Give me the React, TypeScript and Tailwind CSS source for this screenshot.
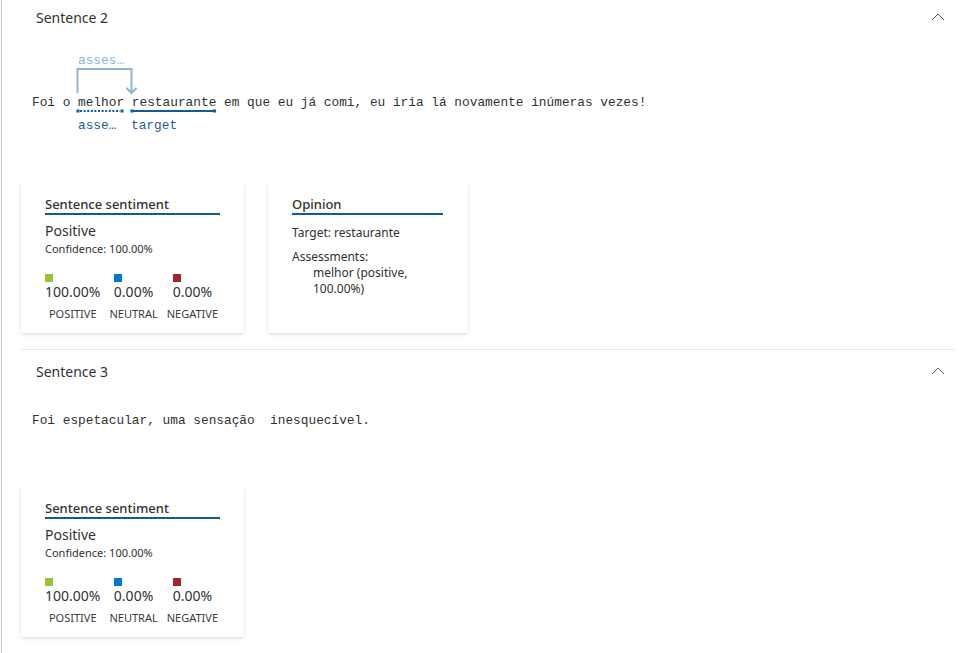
import React from "react";

const SANS = "font-['Segoe_UI','Noto_Sans','Open_Sans',sans-serif]";
const MONO = "font-['Consolas','Liberation_Mono','DejaVu_Sans_Mono',monospace]";

function Chevron() {
  return (
    <svg width="14" height="8" viewBox="0 0 14 8" className="mb-[3px]">
      <polyline points="1,7 7,1 13,7" fill="none" stroke="#605e5c" strokeWidth="1" />
    </svg>
  );
}

function Header({ title, h }: { title: string; h: string }) {
  return (
    <div className={`flex items-center justify-between pl-[15px] pr-[10px] ${h}`}>
      <span className="text-[14px] leading-[20px] text-[#323130]">{title}</span>
      <Chevron />
    </div>
  );
}

function Metric({ color, value, label }: { color: string; value: string; label: string }) {
  return (
    <div className="flex flex-col items-center">
      <div className="flex flex-col items-start">
        <div className="w-[8px] h-[8px]" style={{ backgroundColor: color }} />
        <div className="text-[14px] leading-[20px] text-[#323130]">{value}</div>
      </div>
      <div className="mt-[5px] text-[11px] leading-[14px] text-[#3b3a39]">{label}</div>
    </div>
  );
}

const CARD_SHADOW =
  "shadow-[0_1.6px_3.6px_0_rgba(0,0,0,0.132),0_0.3px_0.9px_0_rgba(0,0,0,0.108)]";

function SentimentCard() {
  return (
    <div className={`w-[223px] h-[151px] bg-white px-[24px] pt-[13px] ${CARD_SHADOW}`}>
      <div className="text-[13px] leading-[18px] font-medium text-[#323130] border-b-2 border-[#0f5a9c]">
        Sentence sentiment
      </div>
      <div className="mt-[6px] text-[14px] leading-[20px] text-[#323130]">Positive</div>
      <div className="mt-[1px] text-[11px] leading-[14px] text-[#323130]">Confidence: 100.00%</div>
      <div className="mt-[18px] flex gap-[9px]">
        <Metric color="#9bc23c" value="100.00%" label="POSITIVE" />
        <Metric color="#0078d4" value="0.00%" label="NEUTRAL" />
        <Metric color="#a4262c" value="0.00%" label="NEGATIVE" />
      </div>
    </div>
  );
}

function OpinionCard() {
  return (
    <div className={`w-[200px] h-[151px] bg-white pl-[24px] pr-[25px] pt-[13px] ${CARD_SHADOW}`}>
      <div className="text-[13px] leading-[18px] font-medium text-[#323130] border-b-2 border-[#0f5a9c]">
        Opinion
      </div>
      <div className="mt-[10px] text-[12px] leading-[16px] text-[#323130]">Target: restaurante</div>
      <div className="mt-[8px] text-[12px] leading-[16px] text-[#323130]">Assessments:</div>
      <div className="pl-[21px] text-[12px] leading-[16px] text-[#323130]">melhor (positive, 100.00%)</div>
    </div>
  );
}

export default function App() {
  return (
    <div className={`w-full min-h-screen bg-white ${SANS}`}>
      <div className="ml-[1px] min-h-screen border-l border-[#c8c6c4] pl-[19px] pr-[19px]">
        {/* Sentence 2 */}
        <section>
          <Header title="Sentence 2" h="h-[36px]" />
          <div className={`relative pl-[11px] pt-[57px] pb-[69px] ${MONO} text-[12.8px] leading-[20px] text-[#323130] whitespace-pre`}>
            <span className="absolute left-[57px] top-[17px] leading-[16px] text-[#8db4d8]">asses…</span>
            <svg className="absolute left-0 top-0" width="300" height="110" viewBox="0 0 300 110">
              <polyline points="56.5,57 56.5,33 110.5,33 110.5,57" fill="none" stroke="#8db4d8" strokeWidth="2" />
              <polyline points="105.5,52 110.5,57 115.5,52" fill="none" stroke="#8db4d8" strokeWidth="2" />
              <rect x="55.5" y="73.5" width="3" height="3" fill="#0f5a9c" />
              <rect x="99.5" y="73.5" width="3" height="3" fill="#0f5a9c" />
              <line x1="59" y1="75" x2="99" y2="75" stroke="#0f5a9c" strokeWidth="2" strokeDasharray="2 1.6" />
              <rect x="109.5" y="73.5" width="3" height="3" fill="#0f5a9c" />
              <rect x="192" y="73.5" width="3" height="3" fill="#0f5a9c" />
              <line x1="111" y1="75" x2="194" y2="75" stroke="#0f5a9c" strokeWidth="2" />
            </svg>
            <div>Foi o melhor restaurante em que eu já comi, eu iria lá novamente inúmeras vezes!</div>
            <span className="absolute left-[57px] top-[81px] leading-[18px] text-[#1b5c9a]">asse…</span>
            <span className="absolute left-[110px] top-[81px] leading-[18px] text-[#1b5c9a]">target</span>
          </div>
          <div className="flex items-start gap-[24px]">
            <SentimentCard />
            <OpinionCard />
          </div>
        </section>
        <div className="mt-[16px] border-t border-[#e6e6e6]" />
        {/* Sentence 3 */}
        <section>
          <Header title="Sentence 3" h="h-[44px]" />
          <div className={`pl-[11px] pt-[17px] pb-[55px] ${MONO} text-[12.8px] leading-[20px] text-[#323130] whitespace-pre`}>
            Foi espetacular, uma sensação  inesquecível.
          </div>
          <div className="flex items-start">
            <SentimentCard />
          </div>
        </section>
      </div>
    </div>
  );
}
